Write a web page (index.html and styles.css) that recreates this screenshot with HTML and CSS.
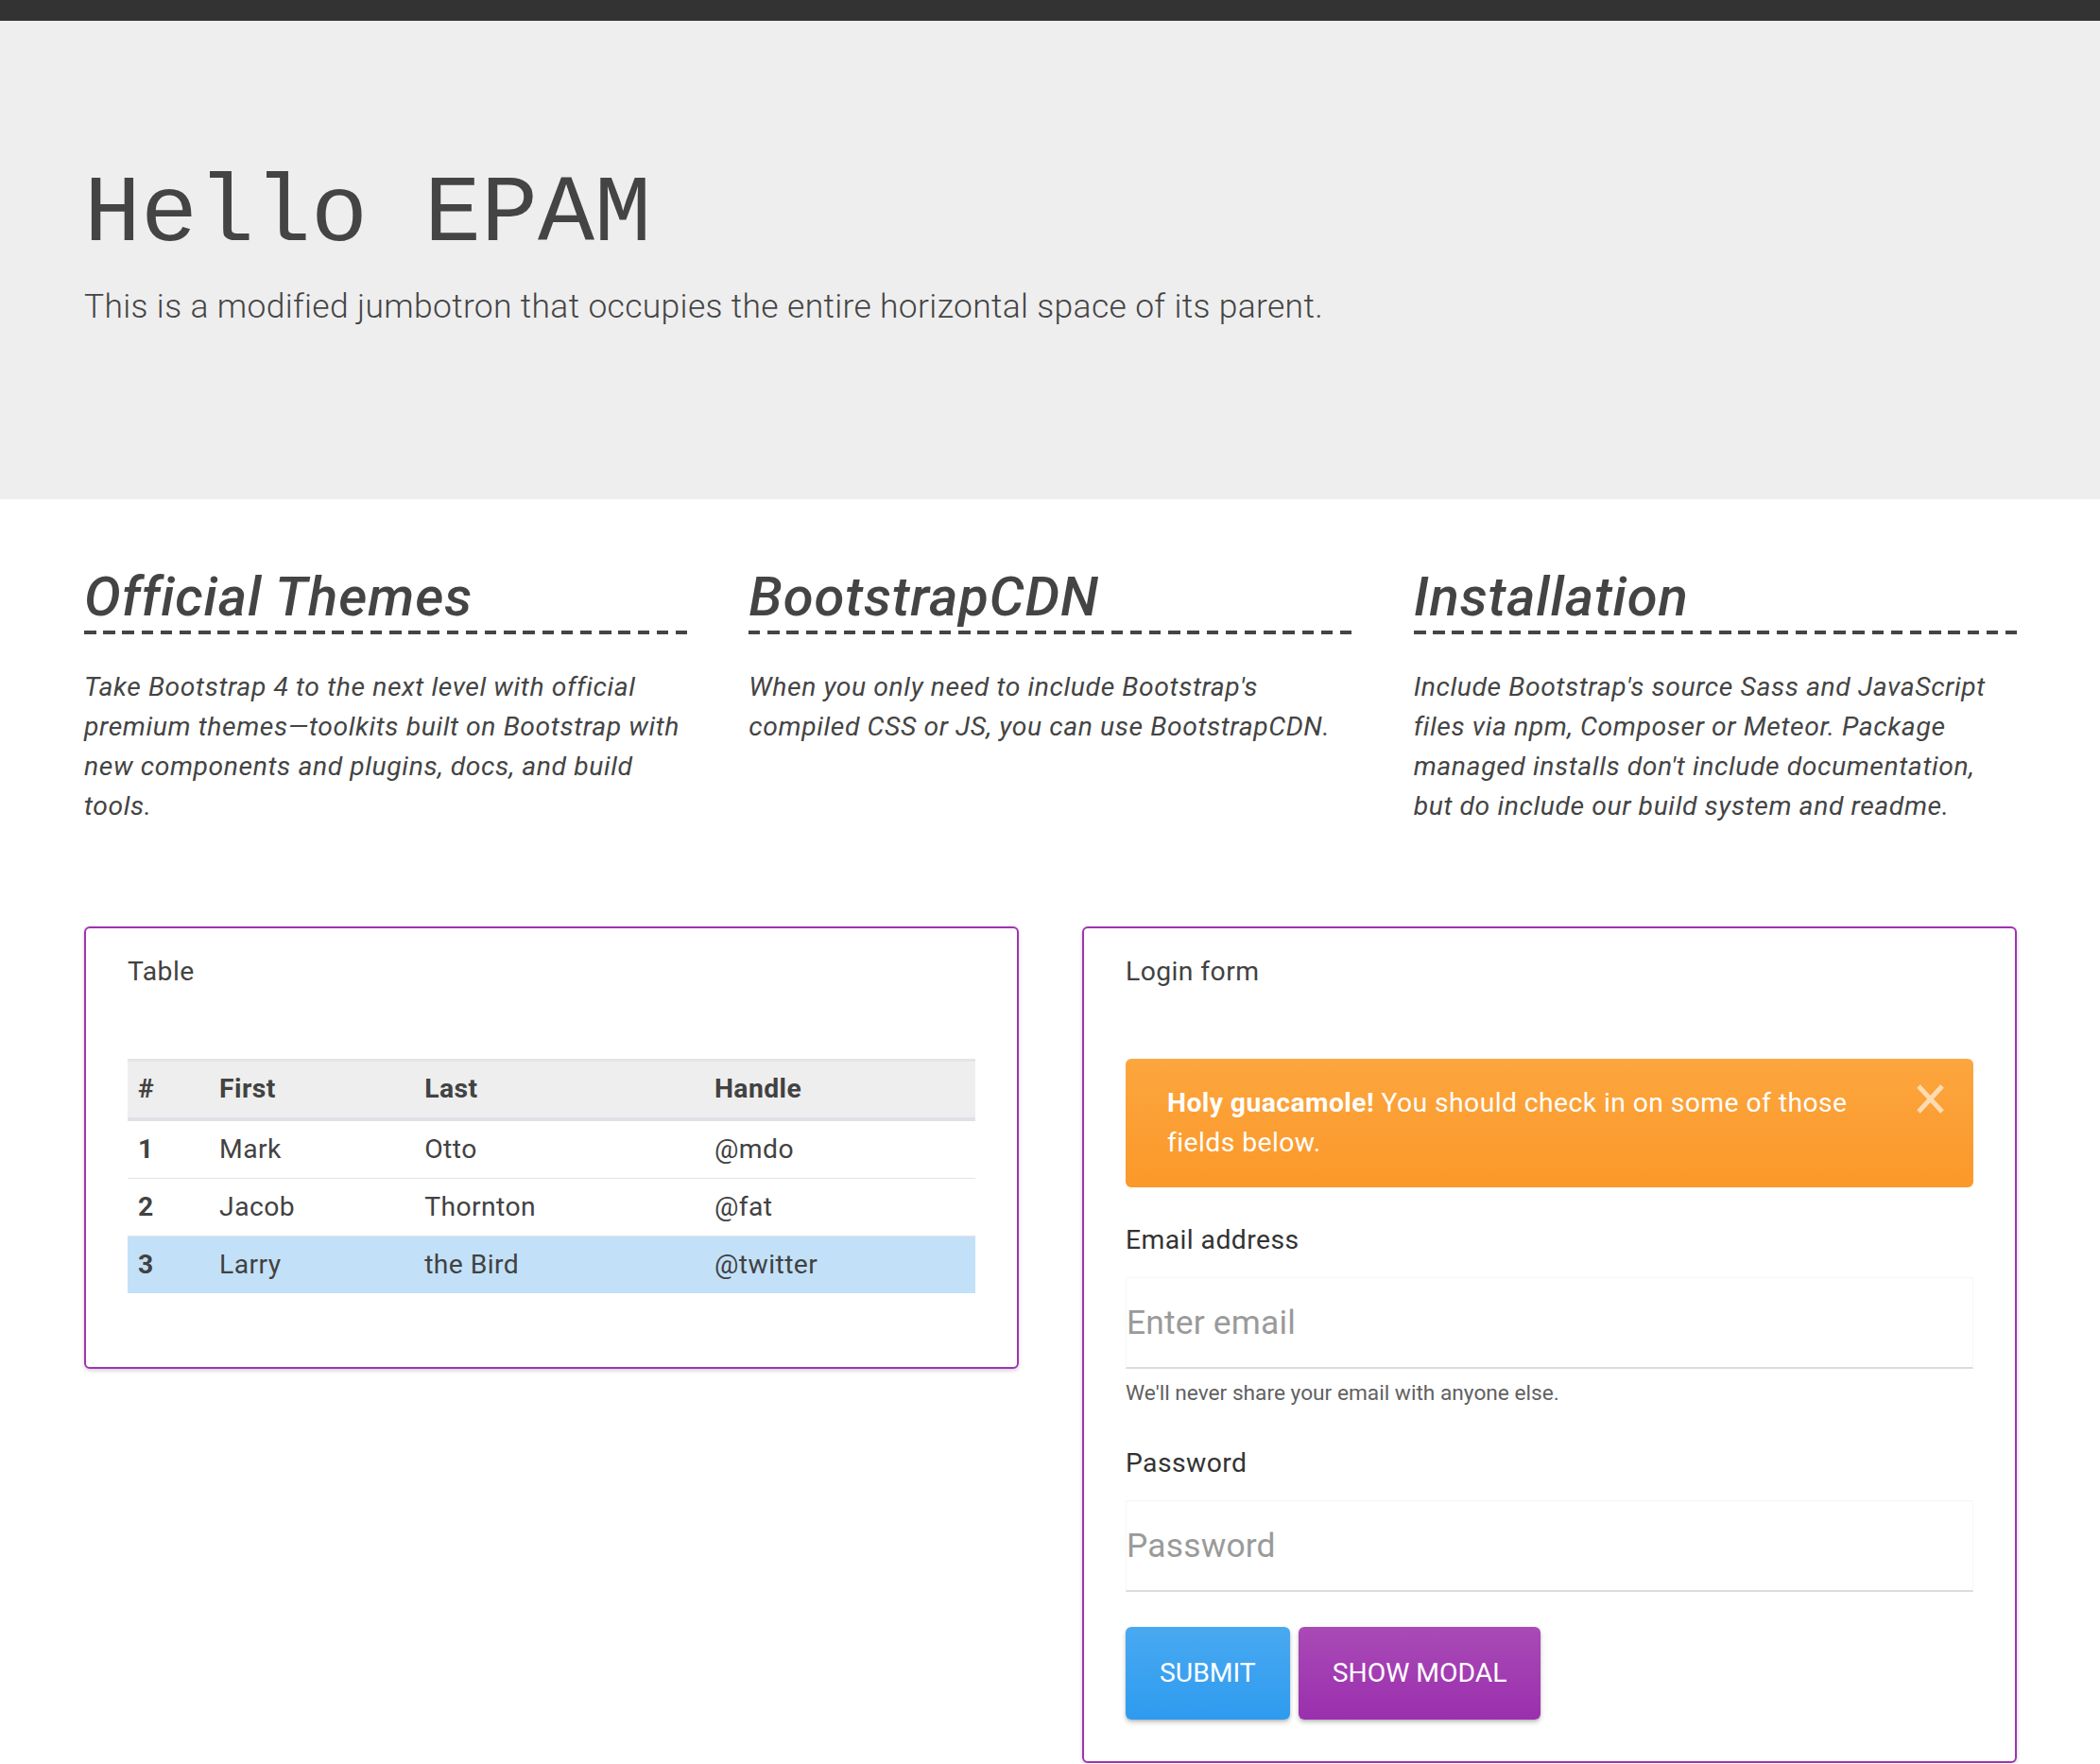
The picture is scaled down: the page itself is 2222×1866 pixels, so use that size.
FILE: index.html
```html
<!DOCTYPE html>
<html lang="en">
<head>
<meta charset="utf-8">
<title>Hello EPAM</title>
<link rel="stylesheet" href="styles.css">
</head>
<body>
<div class="topbar"></div>
<header class="jumbotron">
  <h1 class="display">Hello EPAM</h1>
  <p class="lead">This is a modified jumbotron that occupies the entire horizontal space of its parent.</p>
</header>
<main class="page">
  <section class="features">
    <article class="feature">
      <h2 class="feature-title">Official Themes</h2>
      <p class="feature-text">Take Bootstrap 4 to the next level with official premium themes—toolkits built on Bootstrap with new components and plugins, docs, and build tools.</p>
    </article>
    <article class="feature">
      <h2 class="feature-title">BootstrapCDN</h2>
      <p class="feature-text">When you only need to include Bootstrap's compiled CSS or JS, you can use BootstrapCDN.</p>
    </article>
    <article class="feature">
      <h2 class="feature-title">Installation</h2>
      <p class="feature-text">Include Bootstrap's source Sass and JavaScript files via npm, Composer or Meteor. Package managed installs don't include documentation, but do include our build system and readme.</p>
    </article>
  </section>
  <section class="cards">
    <div class="card card-table">
      <div class="card-title">Table</div>
      <table class="table">
        <colgroup>
          <col class="col-num"><col class="col-first"><col class="col-last"><col class="col-handle">
        </colgroup>
        <thead>
          <tr><th>#</th><th>First</th><th>Last</th><th>Handle</th></tr>
        </thead>
        <tbody>
          <tr><th>1</th><td>Mark</td><td>Otto</td><td>@mdo</td></tr>
          <tr><th>2</th><td>Jacob</td><td>Thornton</td><td>@fat</td></tr>
          <tr class="row-info"><th>3</th><td>Larry</td><td>the Bird</td><td>@twitter</td></tr>
        </tbody>
      </table>
    </div>
    <div class="card card-form">
      <div class="card-title">Login form</div>
      <div class="alert">
        <p class="alert-text"><strong>Holy guacamole!</strong> You should check in on some of those fields below.</p>
        <button class="alert-close" type="button" aria-label="Close">
          <svg viewBox="0 0 31 33" width="31" height="33"><path d="M3 3 L28 30 M28 3 L3 30" stroke="currentColor" stroke-width="5" fill="none"/></svg>
        </button>
      </div>
      <form class="form">
        <label class="form-label" for="email">Email address</label>
        <input class="form-input" id="email" type="email" placeholder="Enter email">
        <small class="form-help">We'll never share your email with anyone else.</small>
        <label class="form-label form-label-spaced" for="pwd">Password</label>
        <input class="form-input" id="pwd" type="password" placeholder="Password">
        <div class="form-actions">
          <button class="btn btn-blue" type="button">Submit</button>
          <button class="btn btn-purple" type="button">Show modal</button>
        </div>
      </form>
    </div>
  </section>
</main>
</body>
</html>
```

FILE: styles.css
```css
html, body {
  margin: 0;
  padding: 0;
}

body {
  font-family: Roboto, "Noto Sans", sans-serif;
  font-size: 28.3px;
  line-height: 42px;
  letter-spacing: 0.015em;
  color: #424242;
  background: #fff;
}

.topbar {
  height: 22px;
  background: #333;
}

.jumbotron {
  box-sizing: border-box;
  height: 506px;
  padding: 146px 89px 0;
  background: #eee;
}

.display {
  margin: 0 0 10px;
  font-family: "Courier New", "Nimbus Mono PS", "Nimbus Mono L", FreeMono, "Courier 10 Pitch", Courier, "Liberation Mono", monospace;
  font-weight: 400;
  font-size: 100px;
  line-height: 120px;
  letter-spacing: 0;
  color: #444;
}

.lead {
  margin: 0;
  font-size: 35.4px;
  font-weight: 300;
  line-height: 1.5;
  letter-spacing: 0.01em;
  color: #444;
}

.page {
  padding: 69px 88px 0 89px;
}

.features {
  display: grid;
  grid-template-columns: repeat(3, 1fr);
  column-gap: 65px;
}

.feature-title {
  margin: 0;
  padding-bottom: 4px;
  font-size: 58px;
  font-style: italic;
  font-weight: 500;
  line-height: 69.6px;
  letter-spacing: 0.015em;
  color: #444;
  background: repeating-linear-gradient(90deg, #444 0 12.5px, transparent 12.5px 20.19px) left bottom / 100% 4px no-repeat;
}

.feature-text {
  margin: 35px 0 0;
  font-size: 28.3px;
  font-style: italic;
  line-height: 42px;
  letter-spacing: 0.6px;
  color: #444;
}

.cards {
  display: grid;
  grid-template-columns: 1fr 1fr;
  column-gap: 67px;
  align-items: start;
  margin-top: 106px;
}

.card {
  border: 2px solid #a033b3;
  border-radius: 6px;
  padding: 25px 44px 44px;
  background: #fff;
  box-shadow: 0 2px 4px rgba(0, 0, 0, 0.18);
}

.card-table {
  padding-bottom: 78px;
}

.card-title {
  margin-bottom: 71px;
  color: #424242;
}

.table {
  width: 100%;
  border-collapse: separate;
  border-spacing: 0;
  table-layout: fixed;
}

.col-num { width: 9.6%; }
.col-first { width: 24.2%; }
.col-last { width: 34.2%; }
.col-handle { width: 32%; }

.table th,
.table td {
  padding: 9px 11px;
  text-align: left;
  line-height: 42px;
  color: #424242;
}

.table th {
  font-weight: 700;
}

.table td {
  font-weight: 400;
}

.table thead th {
  padding: 8px 11px 9px;
  background: #eee;
  border-top: 3px solid #e2e5e8;
  border-bottom: 4px solid #dee2e6;
}

.table tbody tr:not(:last-child) > * {
  border-bottom: 1px solid #e3e3e3;
}

.row-info > * {
  background: #c2e1f8;
}

.alert {
  display: flex;
  align-items: flex-start;
  gap: 26px;
  padding: 26px 30px 26px 44px;
  border-radius: 6px;
  background: linear-gradient(#fca63e, #fb982a);
  color: #fff;
}

.alert-text {
  flex: 1;
  margin: 0;
}

.alert-text strong {
  font-weight: 700;
}

.alert-close {
  flex: none;
  padding: 0;
  border: 0;
  background: none;
  color: rgba(255, 255, 255, 0.62);
  line-height: 0;
  cursor: pointer;
}

.form {
  display: flex;
  flex-direction: column;
  margin: 35px 0 0;
}

.form-label {
  color: #333;
}

.form-label-spaced {
  margin-top: 36px;
}

.form-input {
  box-sizing: border-box;
  width: 100%;
  height: 97px;
  margin-top: 18px;
  padding: 0;
  border: 1px solid #f6f6f6;
  border-bottom: 2px solid #dcdcdc;
  font-family: Roboto, "Noto Sans", sans-serif;
  font-size: 35.4px;
  letter-spacing: 0.005em;
  color: #333;
  background: #fff;
  outline: none;
}

.form-input::placeholder {
  color: #9a9a9a;
}

.form-help {
  margin-top: 9px;
  font-size: 22.7px;
  line-height: 34px;
  letter-spacing: 0;
  color: #616161;
}

.form-actions {
  display: flex;
  gap: 9px;
  margin-top: 37px;
}

.btn {
  height: 98px;
  padding: 0 36px;
  border: 0;
  border-radius: 6px;
  font-family: Roboto, "Noto Sans", sans-serif;
  font-size: 28.3px;
  font-weight: 400;
  letter-spacing: 0;
  text-transform: uppercase;
  color: #fff;
  box-shadow: 0 3px 5px rgba(0, 0, 0, 0.22), 0 1px 2px rgba(0, 0, 0, 0.12);
  cursor: pointer;
}

.btn-blue {
  background: linear-gradient(#49a9f1, #2e9bef);
}

.btn-purple {
  background: linear-gradient(#a94ab6, #9b2fae);
}
```
